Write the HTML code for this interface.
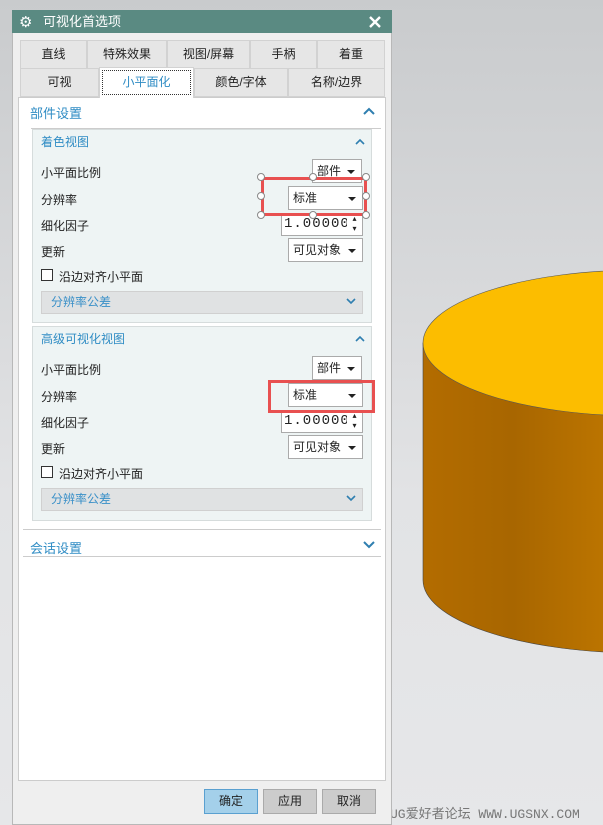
<!DOCTYPE html>
<html><head><meta charset="utf-8"><style>
*{margin:0;padding:0;box-sizing:border-box}
body{width:603px;height:825px;overflow:hidden;position:relative;background:linear-gradient(#c9cbcd,#e2e3e5 60%,#e6e7e9);font-family:"Liberation Sans","Noto Sans CJK SC",sans-serif;font-size:12px;color:#222}
.a{position:absolute}
.tab{position:absolute;background:#e6e6e6;border:1px solid #d2d2d2;text-align:center;line-height:26px;font-size:12px;color:#222}
.lbl{position:absolute;left:41px;font-size:12px}
.dd{position:absolute;background:#fff;border:1px solid #aaa;height:24px;line-height:22px;padding-left:4px;font-size:12px}
.dd:after{content:"";position:absolute;right:6px;top:10px;border-left:4px solid transparent;border-right:4px solid transparent;border-top:4px solid #222}
.blue{color:#2f8cc4}
.hnd{position:absolute;width:8px;height:8px;border-radius:50%;background:#fff;border:1px solid #888}
.btn{position:absolute;top:789px;width:54px;height:25px;border:1px solid #aaa;background:#ccc;text-align:center;line-height:23px}
.num{position:absolute;width:82px;height:23px;background:#fff;border:1px solid #aaa;font-family:'Liberation Mono',monospace;font-size:14px;line-height:21px;padding-left:2px;overflow:hidden;white-space:nowrap;letter-spacing:1px}
</style></head><body>
<svg class="a" style="left:0;top:0" width="603" height="825">
<defs><linearGradient id="g" x1="423" x2="603" gradientUnits="userSpaceOnUse"><stop offset="0" stop-color="#b36c00"/><stop offset="0.5" stop-color="#a86600"/><stop offset="1" stop-color="#bb7400"/></linearGradient></defs>
<path d="M423 343 L423 580 A217 73 0 0 0 640 653 L640 343 Z" fill="url(#g)" stroke="#444" stroke-width="0.6"/>
<ellipse cx="640" cy="343" rx="217" ry="73" fill="#fcbd00" stroke="#555" stroke-width="0.6"/>
</svg>
<div class="a" style="left:390px;top:803px;font-family:'Liberation Mono','Noto Sans CJK SC',monospace;font-size:13px;color:#777">UG爱好者论坛 WWW.UGSNX.COM</div>
<div class="a" style="left:12px;top:10px;width:380px;height:815px;background:#efefef;border:1px solid #b8b8b8"></div>
<div class="a" style="left:12px;top:10px;width:380px;height:23px;background:#5a8a82;color:#fff;font-size:13px;line-height:23px;padding-left:31px">可视化首选项</div>
<div class="a" style="left:19px;top:13px;color:#fff;font-size:15px">⚙</div>
<svg class="a" style="left:368px;top:15px" width="14" height="14"><path d="M2 2L12 12M12 2L2 12" stroke="#fff" stroke-width="2.4"/></svg>
<div class="tab" style="left:20px;top:40px;width:67px;height:29px">直线</div>
<div class="tab" style="left:87px;top:40px;width:80px;height:29px">特殊效果</div>
<div class="tab" style="left:167px;top:40px;width:83px;height:29px">视图/屏幕</div>
<div class="tab" style="left:250px;top:40px;width:67px;height:29px">手柄</div>
<div class="tab" style="left:317px;top:40px;width:68px;height:29px">着重</div>
<div class="tab" style="left:20px;top:68px;width:79px;height:29px">可视</div>
<div class="tab" style="left:194px;top:68px;width:94px;height:29px">颜色/字体</div>
<div class="tab" style="left:288px;top:68px;width:97px;height:29px">名称/边界</div>
<div class="a" style="left:18px;top:97px;width:368px;height:684px;background:#fff;border:1px solid #ccc"></div>
<div class="tab blue" style="left:99px;top:67px;width:95px;height:31px;background:#fff;border-bottom:none"><div style="margin:2px;border:1px dotted #333;height:25px;line-height:23px">小平面化</div></div>
<div class="a blue" style="left:30px;top:103px;font-size:13px">部件设置</div>
<svg class="a" style="left:363px;top:107px" width="12" height="8"><path d="M1 7L6 2L11 7" fill="none" stroke="#2f7fb0" stroke-width="2"/></svg>
<div class="a" style="left:31px;top:128px;width:350px;height:1px;background:#ccc"></div>
<div class="a" style="left:32px;top:129px;width:340px;height:194px;background:#eef4f4;border:1px solid #d6dcdc"></div>
<div class="a blue" style="left:41px;top:133px">着色视图</div>
<svg class="a" style="left:355px;top:138px" width="10" height="7"><path d="M1 6L5 2L9 6" fill="none" stroke="#2f7fb0" stroke-width="1.6"/></svg>
<div class="lbl" style="top:164px">小平面比例</div>
<div class="dd" style="left:312px;top:159px;width:50px">部件</div>
<div class="lbl" style="top:191px">分辨率</div>
<div class="dd" style="left:288px;top:186px;width:75px">标准</div>
<div class="lbl" style="top:217px">细化因子</div>
<div class="num" style="left:281px;top:213px">1.00000</div>
<div class="a" style="left:347px;top:213px;width:15px;height:22px;background:#fff;font-size:8px;line-height:10px;text-align:center;padding-top:1px">▴<br>▾</div>
<div class="lbl" style="top:243px">更新</div>
<div class="dd" style="left:288px;top:238px;width:75px">可见对象</div>
<div class="a" style="left:41px;top:269px;width:12px;height:12px;border:1px solid #333;background:#fff"></div>
<div class="a" style="left:59px;top:268px">沿边对齐小平面</div>
<div class="a" style="left:41px;top:291px;width:322px;height:23px;background:#e0e2e3;border:1px solid #d0d0d0;line-height:21px;padding-left:9px;color:#3a90c8">分辨率公差</div>
<svg class="a" style="left:346px;top:298px" width="10" height="7"><path d="M1 1L5 5L9 1" fill="none" stroke="#2f7fb0" stroke-width="1.6"/></svg>
<div class="a" style="left:261px;top:177px;width:106px;height:39px;border:3px solid #e85050"></div>
<div class="hnd" style="left:257px;top:173px"></div><div class="hnd" style="left:309px;top:173px"></div><div class="hnd" style="left:362px;top:173px"></div>
<div class="hnd" style="left:257px;top:192px"></div><div class="hnd" style="left:362px;top:192px"></div>
<div class="hnd" style="left:257px;top:211px"></div><div class="hnd" style="left:309px;top:211px"></div><div class="hnd" style="left:362px;top:211px"></div>
<div class="a" style="left:32px;top:326px;width:340px;height:195px;background:#eef4f4;border:1px solid #d6dcdc"></div>
<div class="a blue" style="left:41px;top:330px">高级可视化视图</div>
<svg class="a" style="left:355px;top:335px" width="10" height="7"><path d="M1 6L5 2L9 6" fill="none" stroke="#2f7fb0" stroke-width="1.6"/></svg>
<div class="lbl" style="top:361px">小平面比例</div>
<div class="dd" style="left:312px;top:356px;width:50px">部件</div>
<div class="lbl" style="top:388px">分辨率</div>
<div class="dd" style="left:288px;top:383px;width:75px">标准</div>
<div class="lbl" style="top:414px">细化因子</div>
<div class="num" style="left:281px;top:410px">1.00000</div>
<div class="a" style="left:347px;top:410px;width:15px;height:22px;background:#fff;font-size:8px;line-height:10px;text-align:center;padding-top:1px">▴<br>▾</div>
<div class="lbl" style="top:440px">更新</div>
<div class="dd" style="left:288px;top:435px;width:75px">可见对象</div>
<div class="a" style="left:41px;top:466px;width:12px;height:12px;border:1px solid #333;background:#fff"></div>
<div class="a" style="left:59px;top:465px">沿边对齐小平面</div>
<div class="a" style="left:41px;top:488px;width:322px;height:23px;background:#e0e2e3;border:1px solid #d0d0d0;line-height:21px;padding-left:9px;color:#3a90c8">分辨率公差</div>
<svg class="a" style="left:346px;top:495px" width="10" height="7"><path d="M1 1L5 5L9 1" fill="none" stroke="#2f7fb0" stroke-width="1.6"/></svg>
<div class="a" style="left:268px;top:380px;width:107px;height:33px;border:3px solid #e85050"></div>
<div class="a" style="left:23px;top:529px;width:358px;height:1px;background:#ccc"></div>
<div class="a blue" style="left:30px;top:538px;font-size:13px">会话设置</div>
<svg class="a" style="left:363px;top:541px" width="12" height="8"><path d="M1 1L6 6L11 1" fill="none" stroke="#2f7fb0" stroke-width="2"/></svg>
<div class="a" style="left:23px;top:556px;width:358px;height:1px;background:#ccc"></div>
<div class="btn" style="left:204px;background:#a4d0ea;border-color:#5aa0d0">确定</div>
<div class="btn" style="left:263px">应用</div>
<div class="btn" style="left:322px">取消</div>
</body></html>
